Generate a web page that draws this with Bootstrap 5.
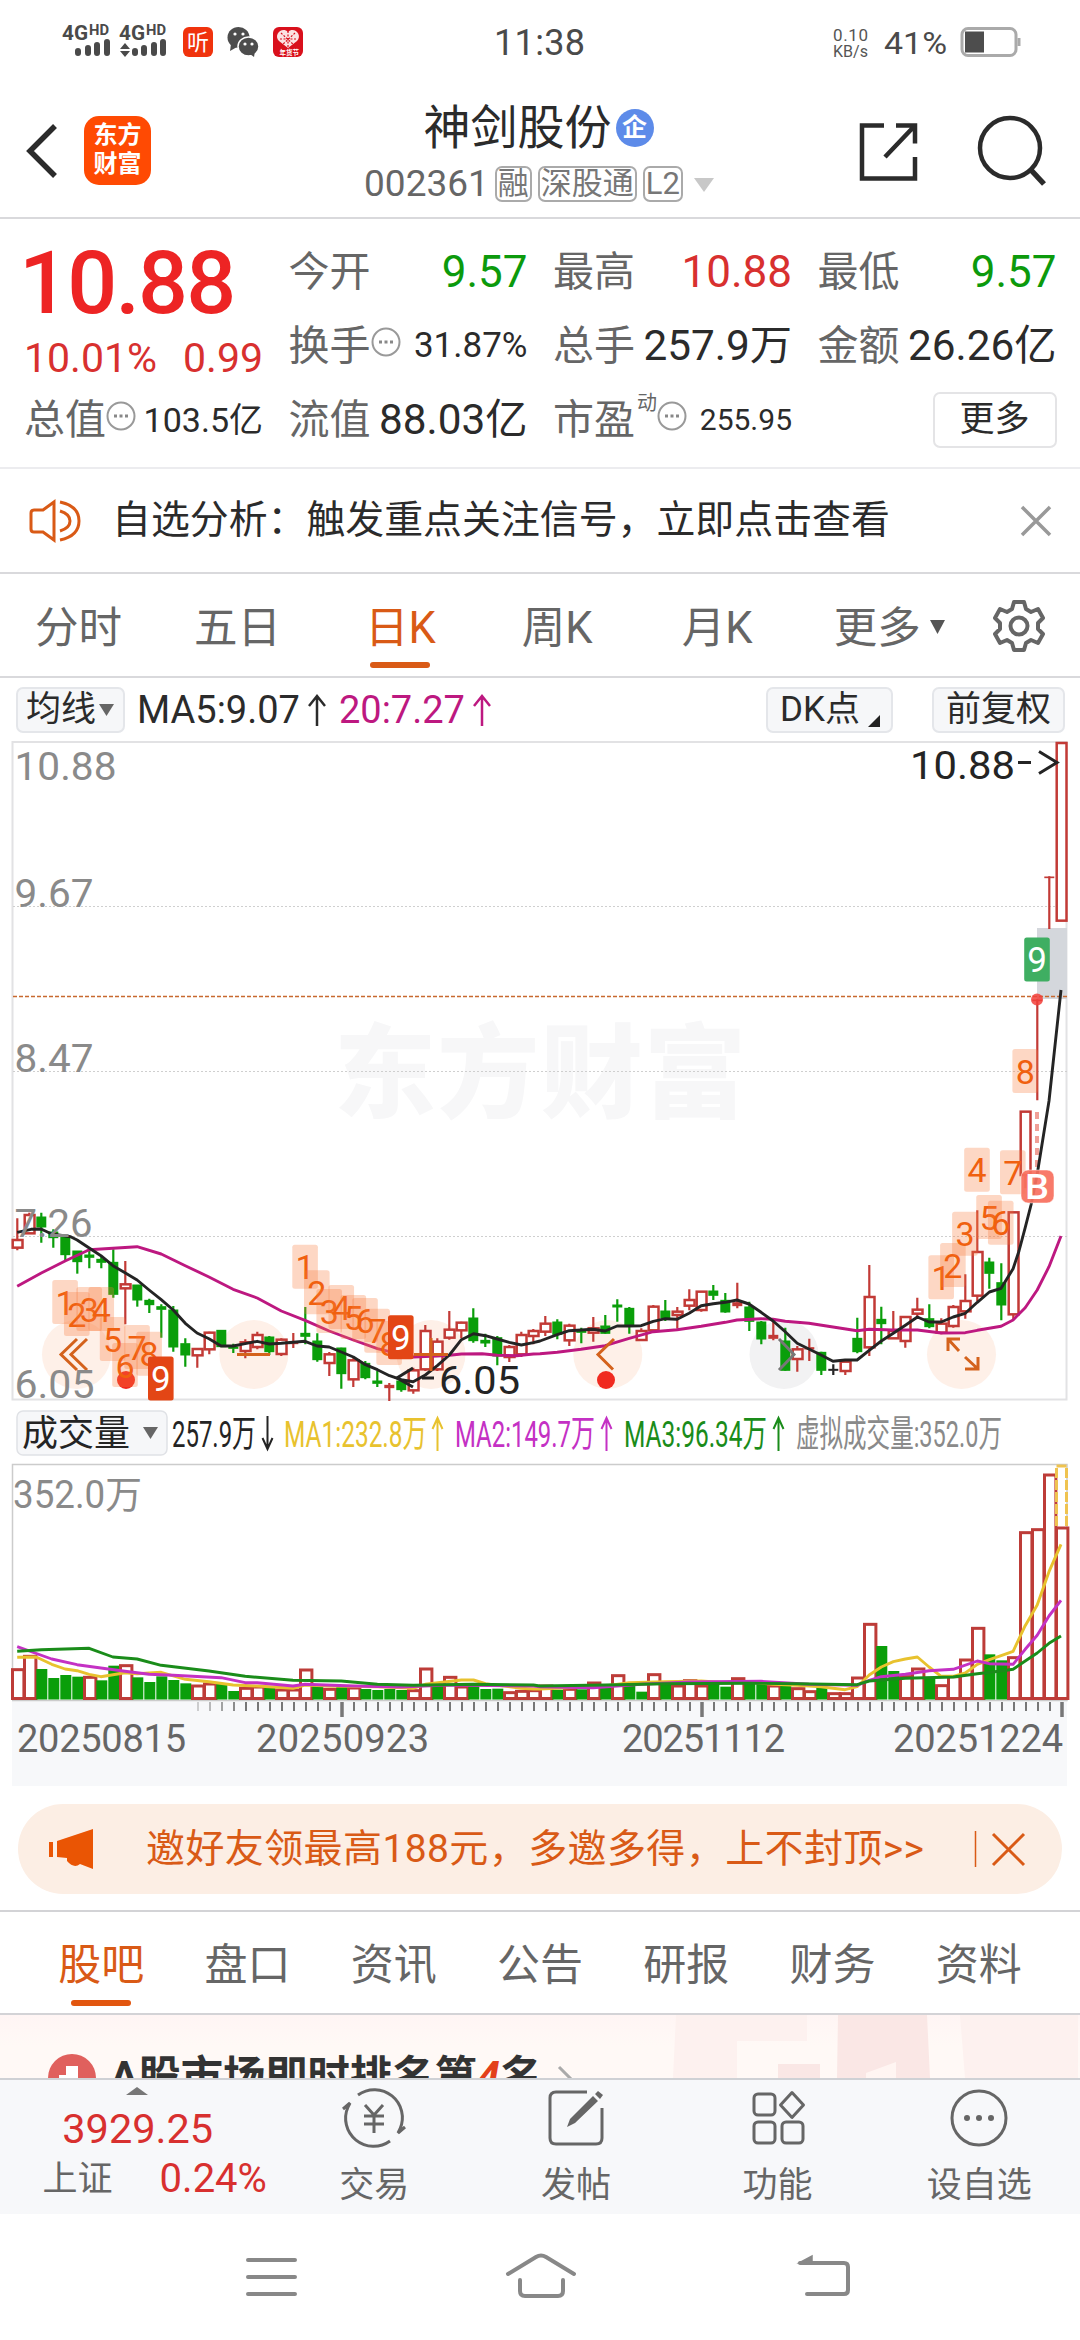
<!DOCTYPE html>
<html lang="zh-CN">
<head>
<meta charset="utf-8">
<meta name="viewport" content="width=device-width, initial-scale=1">
<title>神剑股份 002361</title>
<link href="https://cdn.jsdelivr.net/npm/bootstrap@5.3.0/dist/css/bootstrap.min.css" rel="stylesheet">
<style>
:root{--up:#d8302f;--dn:#0c9a0c;--acc:#d95a16;--ink:#2b2b2b;--mute:#666}
html,body{margin:0;height:2340px;overflow:hidden}
body{width:1080px;background:#fff;color:var(--ink);font-family:Roboto,"Noto Sans CJK SC",sans-serif;line-height:1;white-space:nowrap}
svg{display:block;flex:none;overflow:visible}
svg text{font-family:Roboto,"Noto Sans CJK SC",sans-serif}
.sys-bar{height:84px}
.head-bar{height:135px;border-bottom:2px solid #d9d9dc;padding:0 34px 0 27px}
.app-logo{width:67px;height:69px;border-radius:15px;background:#ff4a03;color:#fff;font-size:24px;line-height:29px;font-weight:700;margin-left:27px;padding-top:5px}
.stock-name{font-size:47px;line-height:52px;margin-left:68px}
.ent{width:38px;height:38px;border-radius:50%;background:#5d8be9;color:#fff;font-size:25px;font-weight:700;margin-left:4px}
.code-row{font-size:37px;color:#666;line-height:38px;margin:11px 0 -4px 70px}
.tagbox{height:36px;border:2px solid #aaa;border-radius:7px;font-size:31px;line-height:31px;padding:0 1px;margin-left:6px;color:#777}
.share-icon{margin-right:58px}
.quotes{height:250px;border-bottom:2px solid #ececef;padding:16px 23px 0 24px}
.qgrid{display:grid;grid-template-columns:239px 239px 239px 239px;column-gap:25.500px;grid-template-rows:74px 74px 74px}
.qcell{display:flex;align-items:center;justify-content:space-between;font-size:41px;color:#666;line-height:60px}
.qcell b{font-weight:400;color:var(--ink)}
.v44{font-size:44px}.v42{font-size:42.300px}.v41{font-size:41px}.v35{font-size:35px}.v34{font-size:34px}.v30{font-size:30px}
.qcell .up,.up{color:var(--up)}.qcell .dn{color:var(--dn)}
.big{font-size:88px;font-weight:500;color:#ed2424;line-height:92px;letter-spacing:-1.8px;padding-top:2px;margin-left:-5px}
.dyn{font-size:20px;top:-24px;margin-left:2px}
.more-btn{width:124px;height:56px;border:2px solid #e4e4e6;border-radius:7px;font-size:35px;color:var(--ink);line-height:52px;padding:0;background:#fff}
.notice{height:105px;border-bottom:2px solid #d9d9dc;padding:0 29px 0 29px;font-size:38.900px}
.notice-msg{margin-left:31px}
.ktabs{height:104px;border-bottom:2px solid #d9d9dc;font-size:43.500px;color:#666;padding:8px 0 0 35px}
.ktabs>*{position:relative}
.cur{color:var(--acc)}
.cur::after{content:"";position:absolute;left:50%;margin-left:-30px;bottom:-17px;width:60px;height:6px;border-radius:3px;background:var(--acc)}
.tools{height:63px;padding:1px 15px 0 16px;font-size:38px}
.pill{background:#f6f7f9;border:2px solid #e4e6ea;border-radius:7px;height:46px;font-size:35px;line-height:42px}
.banner{height:90px;margin:18px 18px 16px;border-radius:45px;background:#fceee4;color:var(--acc);font-size:39px;letter-spacing:.4px;padding:0 36px 0 30px}
.banner-msg{margin-left:52px}
.stabs{height:105px;border-top:2px solid #d3d3d6;border-bottom:2px solid #d3d3d6;padding:6px 28px 0;font-size:43px;color:#666}
.stabs>div{position:relative;width:146.300px;text-align:center}
.stabs .cur::after{bottom:-19px;background:#e2560f}
.rank{height:63px;overflow:hidden;background:linear-gradient(#fff5f4,#fff9f6 30px);position:relative;font-size:42.300px;font-weight:700;color:#333}
.rank-title{position:absolute;left:110px;top:41px}
.rank svg{position:absolute;left:0;top:0}
.dock{height:136px;background:#f7f8fa;border-top:2px solid #cfd1d5;font-size:35px;color:#666}
.dock-item{width:202px;padding-top:9px}
.dock-item span{margin-top:21px}
.idx{width:274px}
.idx-val{font-size:41.500px;line-height:44px;margin-top:12px;padding-left:2px}
.idx-row{margin-top:8px;padding-left:36px}
.navkeys{height:126px}
</style>
</head>
<body class="d-flex flex-column">

<svg class="sys-bar" width="1080" height="84" viewBox="0 0 1080 84">
  <g fill="#4a4a4a" font-weight="700">
    <text x="62" y="39.500" font-size="20" textLength="26" lengthAdjust="spacingAndGlyphs">4G</text><text x="89" y="35" font-size="14" textLength="20" lengthAdjust="spacingAndGlyphs">HD</text>
    <text x="119" y="39.500" font-size="20" textLength="26" lengthAdjust="spacingAndGlyphs">4G</text><text x="146" y="35" font-size="14" textLength="20" lengthAdjust="spacingAndGlyphs">HD</text>
  </g>
  <g stroke="#4a4a4a" stroke-width="6" stroke-linecap="round"><path d="M78 51v2M88 48v5M97 45v8M107 42v11M135 51v2M144 48v5M154 45v8M163 42v11"/></g>
  <path d="M125 43l5 6h-10zM125 57l5-6h-10z" fill="#4a4a4a"/>
  <rect x="183" y="27" width="30" height="30" rx="6" fill="#f0330d"/><text x="187" y="50" font-size="22" fill="#fff">听</text>
  <g fill="#4d4d4d"><ellipse cx="238.500" cy="37.500" rx="11" ry="10.500"/><path d="M231 44l-1 7 7-4z"/><ellipse cx="248.500" cy="46.500" rx="10.500" ry="9.500" stroke="#fff" stroke-width="1.500"/><path d="M250 54l4 3 1-6z"/></g>
  <g fill="#fff"><circle cx="235" cy="34" r="1.600"/><circle cx="243" cy="34" r="1.600"/><circle cx="245" cy="44" r="1.600"/><circle cx="252" cy="44" r="1.600"/></g>
  <rect x="273" y="27" width="30" height="30" rx="6" fill="#d9101c"/>
  <path d="M288 48l-9-7c-6-6 3-15 9-9 6-6 15 3 9 9z" fill="#fbe3e3"/><path d="M281 33l14 13M295 33l-14 13M288 31v18M280 39h16" stroke="#d9101c" stroke-width="1.200" stroke-dasharray="2 1.500"/>
  <text x="279.500" y="55" font-size="6.500" fill="#fff" font-weight="700">年货节</text>
  <text x="494" y="55" font-size="36" fill="#4a4a4a" textLength="91">11:38</text>
  <g fill="#555" font-size="17"><text x="833" y="41" textLength="35">0.10</text><text x="833" y="57" textLength="35" lengthAdjust="spacingAndGlyphs">KB/s</text></g>
  <text x="884" y="54" font-size="32" fill="#4a4a4a" textLength="63" lengthAdjust="spacingAndGlyphs">41%</text>
  <rect x="962" y="28.500" width="54" height="27" rx="6" fill="none" stroke="#aaa" stroke-width="3"/><rect x="965" y="31.500" width="19" height="21" fill="#4d4d4d"/><path d="M1019 38v8" stroke="#aaa" stroke-width="3"/>
</svg>

<header class="head-bar d-flex align-items-center">
  <svg width="30" height="54" viewBox="0 0 30 54"><path d="M28 2L3 27l25 25" fill="none" stroke="#2b2b2b" stroke-width="5.500"/></svg>
  <div class="app-logo text-center">东方<br>财富</div>
  <div class="flex-grow-1 d-flex flex-column align-items-center">
    <div class="d-flex align-items-center stock-name">神剑股份<span class="ent d-flex align-items-center justify-content-center">企</span></div>
    <div class="d-flex align-items-center code-row">002361<span class="tagbox">融</span><span class="tagbox">深股通</span><span class="tagbox">L2</span><svg class="ms-2" width="24" height="15" viewBox="0 0 24 15"><path d="M3 1h20L13 15z" fill="#c8c8c8"/></svg></div>
  </div>
  <svg class="share-icon" width="60" height="60" viewBox="0 0 60 60"><path d="M26 4.500H4v53h53V36M38 4.500h19v18M57 4.500L27 36" fill="none" stroke="#2b2b2b" stroke-width="4.500"/></svg>
  <svg width="70" height="70" viewBox="0 0 70 70"><circle cx="34" cy="32" r="30" fill="none" stroke="#2b2b2b" stroke-width="4.500"/><path d="M55 54l13 14" stroke="#2b2b2b" stroke-width="5.500"/></svg>
</header>

<section class="quotes">
  <div class="qgrid">
    <div class="big">10.88</div>
    <div class="qcell">今开<b class="v44 dn">9.57</b></div>
    <div class="qcell">最高<b class="v44 up">10.88</b></div>
    <div class="qcell">最低<b class="v44 dn">9.57</b></div>
    <div class="qcell pt-4"><b class="v41 up">10.01%</b><b class="v41 up">0.99</b></div>
    <div class="qcell">换手<svg class="mb-2 me-auto" width="30" height="30" viewBox="0 0 30 30"><use href="#dots"/></svg><b class="v35">31.87%</b></div>
    <div class="qcell">总手<b class="v42">257.9万</b></div>
    <div class="qcell">金额<b class="v42">26.26亿</b></div>
    <div class="qcell">总值<svg class="mb-2 me-auto" width="30" height="30" viewBox="0 0 30 30"><g id="dots"><circle cx="15" cy="15" r="13.500" fill="none" stroke="#999" stroke-width="2"/><path d="M8 15h3M13.500 15h3M19 15h3" stroke="#888" stroke-width="3"/></g></svg><b class="v34">103.5亿</b></div>
    <div class="qcell">流值<b class="v42">88.03亿</b></div>
    <div class="qcell"><span>市盈<sup class="dyn">动</sup></span><svg class="mb-2 me-auto" width="30" height="30" viewBox="0 0 30 30"><use href="#dots"/></svg><b class="v30">255.95</b></div>
    <div class="d-flex align-items-center justify-content-end"><button class="btn more-btn">更多</button></div>
  </div>
</section>

<section class="notice d-flex align-items-center">
  <svg width="52" height="42" viewBox="0 0 52 42" fill="none" stroke="#d95a16" stroke-width="3"><path d="M25 2L14 10H5q-3 0-3 3v16q0 3 3 3h9l11 8z"/><path d="M31 2q19 4 19 19T31 40M31 11q10 3 10 10T31 31"/></svg>
  <span class="flex-grow-1 notice-msg">自选分析：触发重点关注信号，立即点击查看</span>
  <svg width="30" height="30" viewBox="0 0 30 30"><path d="M1 1l28 28M29 1L1 29" stroke="#999" stroke-width="3.500"/></svg>
</section>

<nav class="ktabs d-flex align-items-center">
  <div style="width:159px">分时</div><div style="width:171px">五日</div><div class="cur">日K</div>
  <div style="width:160px;margin-left:86px">周K</div><div style="width:152px">月K</div>
  <div class="d-flex align-items-center">更多<svg class="mb-1" width="16" height="14" viewBox="0 0 16 14" style="margin-left:9px"><path d="M0 0h15L7.500 14z" fill="#555"/></svg></div>
  <svg width="54" height="54" viewBox="-27 -27 54 54" style="margin:0 0 6px 46px" fill="none" stroke="#666" stroke-width="4" stroke-linejoin="round"><circle r="8.500"/><path d="M-5-24H5L7-17 12-14 19-17 24-8 19-3V3L24 8 19 17 12 14 7 17 5 24H-5L-7 17-12 14-19 17-24 8-19 3V-3L-24-8-19-17-12-14-7-17z"/></svg>
</nav>

<div class="tools d-flex align-items-center">
  <span class="pill d-flex align-items-center" style="width:109px;padding-left:8px">均线<svg width="15" height="12" viewBox="0 0 15 12" style="margin-left:3px"><path d="M0 0h15L7.500 12z" fill="#666"/></svg></span>
  <span style="margin-left:12px">MA5:9.07</span><svg class="ms-2" width="18" height="32" viewBox="0 0 18 32"><path d="M9 32V2M1 12L9 2l8 10" fill="none" stroke="#2b2b2b" stroke-width="2.500"/></svg>
  <span style="margin-left:13px;color:#bd1880">20:7.27</span><svg class="ms-2" width="18" height="32" viewBox="0 0 18 32"><path d="M9 32V2M1 12L9 2l8 10" fill="none" stroke="#bd1880" stroke-width="2.500"/></svg>
  <span class="pill ms-auto d-flex align-items-center" style="width:127px;padding-left:12px">DK点<svg width="12" height="12" viewBox="0 0 12 12" style="margin:22px 0 0 8px"><path d="M12 0v12H0z" fill="#222"/></svg></span>
  <span class="pill text-center" style="width:133px;margin-left:39px">前复权</span>
</div>

<svg id="kchart" width="1080" height="661" viewBox="0 740 1080 661"></svg>
<svg id="vchart" width="1080" height="384" viewBox="0 1401 1080 384"></svg>

<section class="banner d-flex align-items-center flex-shrink-0">
  <svg width="46" height="40" viewBox="0 0 46 40" fill="#ea5504"><path d="M1 13h4v15H1zM9 12L45 0v40l-13-5q-6 5-13-3v-3L9 28z"/></svg>
  <span class="flex-grow-1 banner-msg">邀好友领最高188元，多邀多得，上不封顶&gt;&gt;</span>
  <svg width="52" height="36" viewBox="0 0 52 36"><path d="M1.500 0v36" stroke="#d95a16" stroke-width="1.500"/><path d="M19 3l31 31M50 3L19 34" stroke="#d95a16" stroke-width="3"/></svg>
</section>

<nav class="stabs d-flex align-items-center flex-shrink-0">
  <div class="cur">股吧</div><div>盘口</div><div>资讯</div><div>公告</div><div>研报</div><div>财务</div><div>资料</div>
</nav>

<section class="rank flex-shrink-0">
  <svg width="1080" height="63" viewBox="0 2015 1080 63">
    <path d="M676 2015h131v26h-70v37h-64zM960 2015h118v63H965z" fill="#fdf1ef"/><path d="M838 2015h89l3 63h-93zM778 2064h42v14h-42z" fill="#fae7e5"/><path d="M866 2073l30-11v16h-30z" fill="#fff5f2"/>
    <circle cx="72" cy="2078" r="24" fill="#e0605d"/><path d="M59 2075h7v3h-7zM66 2066h12v12H66z" fill="#fff"/>
    <path d="M559 2067l13 13-13 13" fill="none" stroke="#aaa" stroke-width="3"/>
  </svg>
  <div class="rank-title">A股市场即时排名第<i style="color:#e3401a">4</i>名</div>
</section>

<footer class="dock d-flex flex-shrink-0">
  <div class="idx d-flex flex-column align-items-center">
    <svg width="22" height="8" viewBox="0 0 22 8" style="margin-top:7px"><path d="M0 8L11 0l11 8z" fill="#777"/></svg>
    <div class="up idx-val">3929.25</div>
    <div class="d-flex align-items-center idx-row"><span>上证</span><span class="up" style="font-size:40px;margin-left:47px">0.24%</span></div>
  </div>
  <div class="dock-item d-flex flex-column align-items-center">
    <svg width="66" height="58" viewBox="-33 -29 66 58" fill="none" stroke="#666" stroke-width="3"><path d="M-16-23A28 28 0 0 1 26 11l-2 4 7-6M16 23A28 28 0 0 1-26-11l2-4-7 6M-9-13L0-3 9-13M0-3v18M-10-2h20M-10 6h20"/></svg>
    <span>交易</span>
  </div>
  <div class="dock-item d-flex flex-column align-items-center">
    <svg width="58" height="58" viewBox="0 0 58 58" fill="none" stroke="#666" stroke-width="3"><path d="M40 3H9q-6 0-6 6v40q0 6 6 6h40q6 0 6-6V19"/><path d="M20 38l3-8L46 7l5 5-23 22zM48 5l3-3 5 4-3 4z" fill="#666" stroke="none"/></svg>
    <span>发帖</span>
  </div>
  <div class="dock-item d-flex flex-column align-items-center">
    <svg width="54" height="58" viewBox="0 0 54 58" fill="none" stroke="#666" stroke-width="3"><rect x="3" y="5" width="21" height="21" rx="4"/><rect x="3" y="33" width="21" height="21" rx="4"/><rect x="31" y="33" width="21" height="21" rx="4"/><path d="M41 3.500L52.500 16 41 28.500 29.500 16z" stroke-linejoin="round"/></svg>
    <span>功能</span>
  </div>
  <div class="dock-item d-flex flex-column align-items-center">
    <svg width="58" height="58" viewBox="-29 -29 58 58"><circle r="27" fill="none" stroke="#666" stroke-width="3"/><g fill="#666"><circle cx="-12" r="3"/><circle r="3"/><circle cx="12" r="3"/></g></svg>
    <span>设自选</span>
  </div>
</footer>

<svg class="navkeys" width="1080" height="126" viewBox="0 2214 1080 126" fill="none" stroke="#888" stroke-width="4" stroke-linecap="round">
  <path d="M248 2260h47M248 2277h47M248 2294h47"/>
  <path d="M508 2274l28-17q5-3 10 0l28 17M520 2280v11q0 5 5 5h33q5 0 5-5v-11"/>
  <path d="M800 2263h44q4 0 4 4v23q0 4-4 4h-37"/><path d="M799 2263l13-7v8z" fill="#888" stroke-width="1.500"/>
</svg>

<script>
const RED='#c23a36', GRN='#0a9e0a', INK='#242424', PUR='#bd1880';
const X=i=>17.3+12*i;
// curve points: two halves of the plot, each in its own raster units
const line=(a,b,y0)=>[...a.map(p=>[p[0]/2.904,y0+p[1]/3]),...b.map(p=>[540+p[0]/2.904,y0+p[1]/3])].map(p=>p.map(v=>v.toFixed(1)).join(',')).join(' ');
const P=s=>s.trim().split(/\s+/).map(p=>p.split(',').map(Number));

// colour, high, body top, body bottom, low
const K=`r352,417,440,448 r335,342,397,397 g335,348,378,425 g385,393,410,440 g405,408,461,480 g450,450,482,518 g450,462,469,502 g468,475,484,502 g445,484,580,590 r480,550,562,670 g552,552,597,617 g593,598,611,636 g610,617,625,710 g615,627,738,752 g712,728,762,797 r742,744,763,800 r692,695,745,760 g688,688,737,737 g728,738,742,756 r715,724,750,772 r692,702,738,745 g705,708,752,762 r712,716,759,765 r696,724,728,741 g618,697,706,730 g697,720,776,782 r753,760,786,825 g740,741,818,863 r772,778,835,858 g780,787,830,835 g810,840,847,858 r846,853,860,900 g835,840,866,872 r800,808,868,878 r672,690,805,810 r712,722,805,810 r630,686,710,716 r662,665,688,712 g622,651,719,725 g698,718,726,738 g705,710,765,793 r732,738,768,783 r692,702,760,768 r684,690,705,730
r645,668,692,705 g655,663,700,715 r668,674,718,735 g680,690,694,727 r648,682,695,722 g642,675,697,699 g595,612,618,662 g618,622,673,698 r682,690,717,720 r612,617,688,690 g597,630,650,660 r618,632,642,683 r565,597,614,628 r570,572,627,632 g552,570,583,597 g576,598,633,635 r545,605,614,622 g602,618,661,690 g660,663,714,730 r662,703,712,718 g680,720,808,810 r735,745,774,812 r713,740,744,780 g752,754,808,822 k790,805,808,822 r778,782,810,822 g650,712,752,757 r492,588,739,765 g617,655,668,730 r630,690,712,714 r645,648,720,740 r590,626,638,648 g610,653,677,682 r652,668,695,700 r612,618,675,680 r520,600,631,653 r328,453,584,600 g470,483,517,563 g487,545,612,658 r332,334,640,657 r30,32,222,262 r-305,-303,-301,-2 r-674,-672,-670,-516 r-1076,-1074,-541,-541`.trim().split(/\s+/);
let s='';
s+=`<rect x="12.500" y="741" width="1054" height="657.500" fill="none" stroke="#e2e2e4" stroke-width="2"/>`;
s+=`<text x="334" y="1109" font-size="102" font-weight="900" fill="#f7f7f8" textLength="412">东方财富</text>`;
s+=`<path d="M13 905.500H1067M13 1070.500H1067M13 1235.500H1067" stroke="#cfcfcf" stroke-width="1.200" stroke-dasharray="2 2"/>`;
s+=`<rect x="1037" y="927" width="30" height="71" fill="#d4d7dc"/>`;
[76.5,253.8,431,607.8,784,961.5].forEach((x,i)=>s+=`<circle cx="${x}" cy="1353.500" r="34.500" fill="${i==4?'#f2f2f3':'#fef0e8'}"/>`);
K.forEach((k,i)=>{
  const c={r:RED,g:GRN,k:INK}[k[0]], [h,t,b,l]=k.slice(1).split(',').map(v=>1100+v/3), x=X(i);
  s+=`<path d="M${x} ${h}V${t}M${x} ${b}V${l}" stroke="${c}" stroke-width="2.200"/>`;
  if(k[0]=='r'&&b-t>3) s+=`<rect x="${x-4.600}" y="${t}" width="9.800" height="${b-t}" fill="#fff" stroke="${c}" stroke-width="2.500"/>`;
  else s+=`<rect x="${x-5}" y="${t-.5}" width="10" height="${b-t+1}" fill="${c}"/>`;
});
s+=`<path d="M13 995.500H1067" stroke="#c8692f" stroke-width="1.500" stroke-dasharray="4 2"/>`;
s+=`<path d="M1037 1111V1170" stroke="#f0a097" stroke-width="4" stroke-dasharray="7 5"/><circle cx="1037" cy="998.500" r="6" fill="#f2403a" fill-opacity=".85"/>`;
const ma5=line(P(`50,394 90,385 119,384 150,399 205,407 224,417 259,441 293,464 328,494 363,515 398,537 433,567 468,596 503,627 538,667 572,696 607,713 642,735 677,735 712,728 747,721 782,729 817,727 851,724 886,721 921,735 956,738 991,753 1026,768 1061,791 1096,806 1131,824 1165,836 1200,842 1235,822 1270,794 1305,762 1340,716 1375,698 1410,704 1444,714 1479,724 1514,732 1549,725`),P(`0,720 50,701 85,689 119,687 154,685 189,690 224,675 259,675 294,674 329,661 364,653 398,655 433,637 468,614 503,608 538,604 572,597 607,609 642,634 677,660 712,692 747,727 781,744 816,762 851,781 886,777 921,777 956,748 991,720 1026,697 1061,673 1096,648 1130,663 1165,663 1200,648 1235,637 1270,604 1305,573 1339,562 1374,503 1391,450 1409,380 1426,312 1444,220 1478,0 1513,-333`),1100);
const ma20=line(P(`50,556 120,516 189,480 259,446 328,442 398,437 468,459 538,494 607,528 677,565 747,591 817,630 886,658 956,690 1026,717 1096,743 1131,752 1200,768 1270,765 1305,763 1340,759 1400,758 1444,763 1500,764 1549,759`),P(`0,758 50,754 119,745 189,734 259,712 329,692 398,686 468,676 538,664 572,657 642,653 677,655 712,661 781,667 851,678 921,689 956,685 1026,687 1096,687 1165,696 1235,695 1270,688 1339,676 1374,657 1409,620 1444,567 1478,497 1513,405`),1100);
s+=`<polyline points="${ma20}" fill="none" stroke="${PUR}" stroke-width="2.900" stroke-linejoin="round"/><polyline points="${ma5}" fill="none" stroke="${INK}" stroke-width="2.900" stroke-linejoin="round"/>`;
// round buttons: glyphs and red markers
s+=`<g fill="none" stroke="#d4621c" stroke-width="3"><path d="M77 1338L61 1353.500l16 15.500M87 1338L71 1353.500l16 15.500M237 1353.500h33M414 1353.500h34M431 1337v33M614 1338L598 1353.500l15 15M948 1350v-12h12M948 1338l11 12M978 1356v12h-13M978 1368l-13-12"/></g><path d="M779 1338l15 15.500-15 15.500" fill="none" stroke="#777" stroke-width="3"/>`;
s+=`<circle cx="126" cy="1379" r="9" fill="#f02a20"/><circle cx="606" cy="1379" r="9" fill="#f02a20"/>`;
// sequential count marks
const mark=(x,y,n,o={})=>`<rect x="${x-12.800}" y="${y-22}" width="25.600" height="44" rx="2.500" fill="${o.bg||'#fa7c3c'}" fill-opacity="${o.bg?1:.3}"/><text x="${x}" y="${y+12.500}" font-size="${o.bg?35:34}" text-anchor="middle" fill="${o.bg?'#fff':'#f0600f'}">${n}</text>`;
[[189,603],[223,639],[259,624],[294,624],[327,714],[363,792],[398,738],[433,758]].forEach((p,i)=>s+=mark(p[0]/2.904,1100+p[1]/3,i+1));
[[886,497],[920,574],[956,630],[991,618],[1026,648],[1060,657],[1095,689],[1130,726]].forEach((p,i)=>s+=mark(p[0]/2.904,1100+p[1]/3,i+1));
[[1165,529],[1199,492],[1234,398],[1269,206],[1304,348],[1338,365],[1373,214],[1409,-90]].forEach((p,i)=>s+=mark(540+p[0]/2.904,1100+p[1]/3,i+1));
s+=mark(160.8,1377.5,9,{bg:'#e34615'})+mark(400.8,1336.3,9,{bg:'#e34615'})+mark(1037,958.5,9,{bg:'#3fae62'});
s+=`<rect x="1021" y="1169" width="33" height="33" rx="7" fill="#f7705f" fill-opacity=".93" stroke="#fff" stroke-opacity=".5"/><text x="1037" y="1197.500" font-size="35" font-weight="500" fill="#fff" text-anchor="middle" textLength="24" lengthAdjust="spacingAndGlyphs">B</text>`;
const lab=(y,w,t)=>`<text x="14.500" y="${y}" textLength="${w}" lengthAdjust="spacingAndGlyphs">${t}</text>`;
s+=`<g font-size="38.500" fill="#8a8a8a">${lab(779,102,'10.88')}${lab(906,79,'9.67')}${lab(1071,79,'8.47')}${lab(1236,78,'7.26')}${lab(1396.5,80,'6.05')}</g>`;
s+=`<g font-size="39" fill="${INK}"><text x="910" y="778" textLength="105" lengthAdjust="spacingAndGlyphs">10.88</text><text x="439" y="1392.500" textLength="81" lengthAdjust="spacingAndGlyphs">6.05</text></g><path d="M1018 761.500h13M1039 750.500l18 11-18 11M413 1367l-16 10 16 9M422 1377h12" fill="none" stroke="${INK}" stroke-width="3"/>`;
document.getElementById('kchart').innerHTML=s;

// volume pane
const V=`r803 r763 g804 g831 g822 g827 r826 g838 g794 r791 g829 g843 g826 g837 g847 r852 r846 g848 g870 r859 r855 g858 r864 r864 r804 g852 r862 g855 r858 g864 g867 g864 g867 r866 r801 g850 r826 r855 g855 g864 g863 r872 r868 r866 r852 g866 r862 g865 r843 g858 r821 g852 g872 r818 g852 r852 r836 r852 g848 g857 r830 g838 g848 r852 g850 r860 r869 g860 r875 r875 r828 r667 g735 g810 r824 r801 g828 r851 r824 r774 r679 g760 g778 r767 r392 r383 r219 r378`.split(' ');
let v=`<rect x="12" y="1700" width="1055" height="85" fill="#f7f8fa"/><path d="M12.500 1699V1463.500H1067V1699.500H12" fill="none" stroke="#ccc" stroke-width="1.500"/>`;
v+=`<rect x="17" y="1410" width="150" height="44" rx="6" fill="#f6f7f9" stroke="#e0e2e6" stroke-width="1.500"/><text x="22" y="1444.500" font-size="36" fill="${INK}">成交量</text><path d="M143 1426h15l-7.500 12z" fill="#666"/>`;
const rd=(x,w,t,c)=>`<text x="${x}" y="1446" font-size="37" fill="${c}" textLength="${w}" lengthAdjust="spacingAndGlyphs">${t}</text>`;
const ar=(x,c,d)=>`<path d="${d?`M${x} 1415v33m-5-11l5 11 5-11`:`M${x} 1450v-33m-5 11l5-11 5 11`}" fill="none" stroke="${c}" stroke-width="2"/>`;
const Y='#e8c22e', M='#c431c4', G='#1a8c1a';
v+=rd(172,84,'257.9万',INK)+ar(267.5,INK,1)+rd(284,143,'MA1:232.8万',Y)+ar(437.5,Y)+rd(455,140,'MA2:149.7万',M)+ar(606.500,M)+rd(624,143,'MA3:96.34万',G)+ar(778.500,G)+rd(796,206,'虚拟成交量:352.0万','#8a8a8a');
v+=`<text x="13" y="1507" font-size="38" fill="#8a8a8a" textLength="129" lengthAdjust="spacingAndGlyphs">352.0万</text>`;
V.forEach((k,i)=>{
  const t=1400+k.slice(1)/3, x=X(i), h=1698.5-t;
  v+=k[0]=='r'?`<rect x="${x-4.800}" y="${t+1}" width="11.400" height="${h-2}" fill="#fff" stroke="#bd3c38" stroke-width="3"/>`:`<rect x="${x-5}" y="${t}" width="11" height="${h}" fill="${GRN}"/>`;
});
v+=`<path d="M1056.500 1525V1465H1066.500V1525" fill="none" stroke="#efc350" stroke-width="3" stroke-dasharray="10 2"/>`;
const L=(a,b,c)=>v+=`<polyline points="${line(P(a),P(b),1400)}" fill="none" stroke="${c}" stroke-width="2.900" stroke-linejoin="round"/>`;
L('50,769 105,768 150,790 189,804 224,809 259,820 293,827 363,815 398,818 468,814 538,835 607,842 677,852 747,855 851,862 886,852 956,855 1096,857 1200,862 1235,850 1340,837 1375,837 1410,848 1514,862 1549,864','0,864 119,858 189,855 259,845 364,842 468,840 538,845 607,843 677,850 747,853 816,857 886,866 921,857 956,822 991,798 1026,782 1061,774 1096,768 1130,798 1165,826 1200,826 1235,816 1270,790 1305,776 1339,764 1374,751 1409,674 1444,612 1478,512 1513,430',Y);
L('50,737 150,774 224,791 293,801 363,811 433,820 503,823 642,830 712,845 747,845 851,855 886,850 1026,855 1165,858 1300,852 1549,855','0,857 154,860 294,850 433,843 642,841 781,850 921,853 956,838 991,827 1061,820 1130,809 1200,805 1270,780 1305,788 1374,790 1409,745 1444,703 1478,645 1513,598',M);
L('50,751 120,746 259,742 328,768 398,774 468,793 607,810 712,826 851,838 991,840 1096,850 1200,853 1375,850 1549,852','0,855 189,852 364,848 607,847 747,848 921,851 956,840 1061,832 1200,828 1270,818 1339,810 1374,805 1409,780 1444,756 1478,727 1513,705',G);
for(let i=15;i<88;i++){const big=i==27||i==57||i==87;v+=`<path d="M${X(i)+.7} 1701v${big?15:9}" stroke="#777" stroke-width="${big?3.500:2}" stroke-opacity="${Math.min(1,(i-13)/6)}"/>`}
[[17,169,'20250815'],[256,173,'20250923'],[622,163,'20251112'],[893,170,'20251224']].forEach(d=>v+=`<text x="${d[0]}" y="1750.500" font-size="38" fill="#666" textLength="${d[1]}">${d[2]}</text>`);
document.getElementById('vchart').innerHTML=v;
</script>
<script src="https://cdn.jsdelivr.net/npm/bootstrap@5.3.0/dist/js/bootstrap.bundle.min.js"></script>
</body>
</html>
